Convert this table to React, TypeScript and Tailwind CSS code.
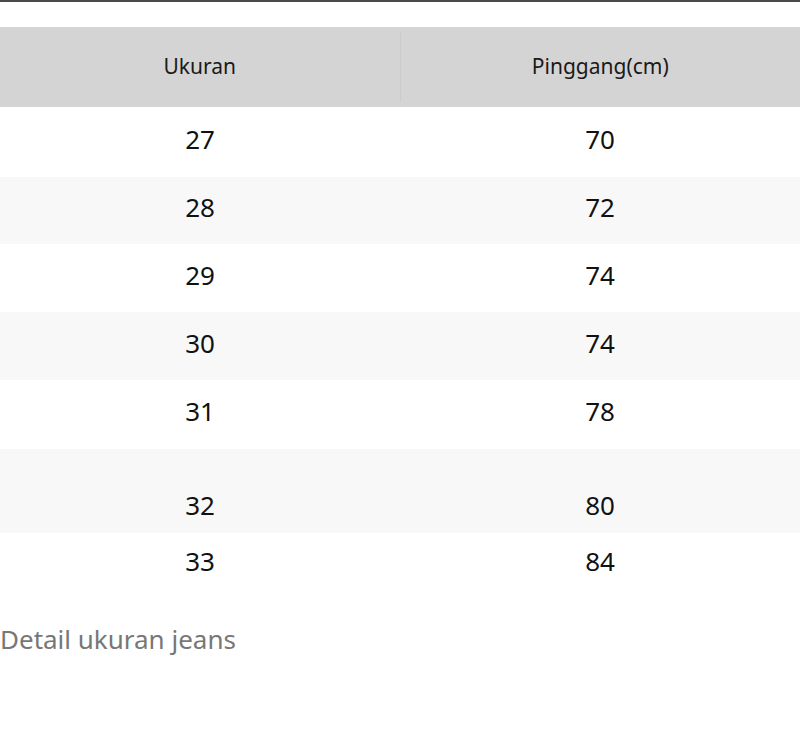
export default function App() {
  const rows: { a: string; b: string; bg: string; h: string; pad?: string }[] = [
    { a: "27", b: "70", bg: "bg-white", h: "h-[70px]" },
    { a: "28", b: "72", bg: "bg-[#f8f8f8]", h: "h-[67px]" },
    { a: "29", b: "74", bg: "bg-white", h: "h-[68px]" },
    { a: "30", b: "74", bg: "bg-[#f8f8f8]", h: "h-[68px]" },
    { a: "31", b: "78", bg: "bg-white", h: "h-[69px]" },
    { a: "32", b: "80", bg: "bg-[#f8f8f8]", h: "h-[84px]", pad: "pt-[34px]" },
    { a: "33", b: "84", bg: "bg-white", h: "h-[63px]" },
  ];
  return (
    <div className="w-[800px] h-[738px] bg-white" style={{ fontFamily: '"Noto Sans", "Open Sans", sans-serif' }}>
      <div className="h-[2px] bg-[#4a4a4a]" />
      <div className="h-[25px]" />
      <div className="flex h-[80px] bg-[#d4d4d4] text-[21px] text-[#1a1a1a]">
        <div className="flex-1 flex items-center justify-center">Ukuran</div>
        <div className="w-px my-[5px] bg-[#cbcbcb]" />
        <div className="flex-1 flex items-center justify-center">Pinggang(cm)</div>
      </div>
      {rows.map((r) => (
        <div key={r.a} className={`flex ${r.bg} ${r.h} text-[26px] text-[#111]`}>
          <div className={`flex-1 flex items-center justify-center pb-[6px] ${r.pad ?? ""}`}>{r.a}</div>
          <div className={`flex-1 flex items-center justify-center pb-[6px] ${r.pad ?? ""}`}>{r.b}</div>
        </div>
      ))}
      <div className="pt-[24px] text-[26px] text-[#777]">Detail ukuran jeans</div>
    </div>
  );
}
